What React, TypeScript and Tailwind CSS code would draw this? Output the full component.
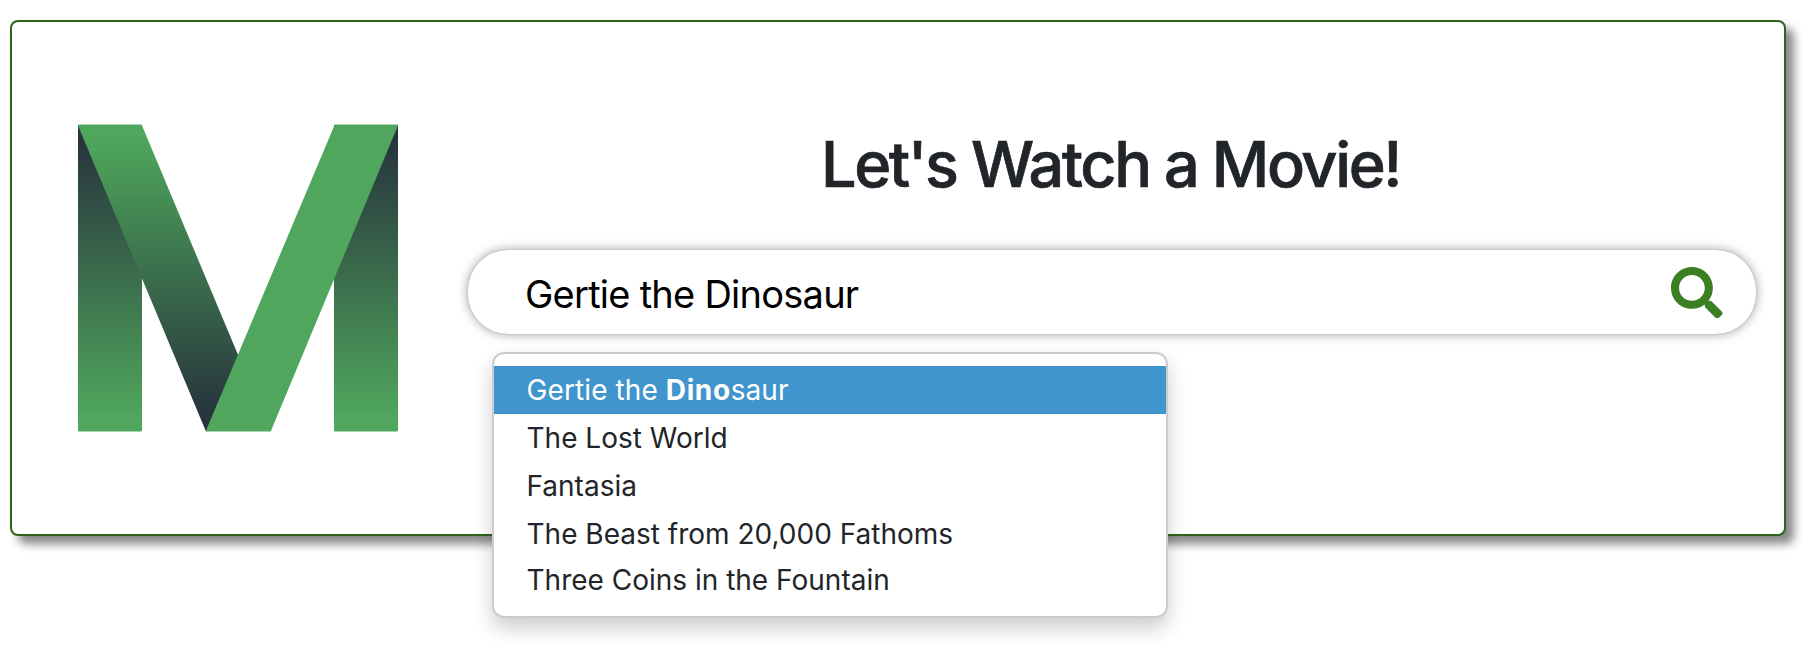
import { FaSearch } from "react-icons/fa";

const movies = [
  "The Lost World",
  "Fantasia",
  "The Beast from 20,000 Fathoms",
  "Three Coins in the Fountain",
];

function Logo() {
  return (
    <svg width="320" height="308" viewBox="0 0 320 308" className="block shrink-0" aria-label="Logo">
      <defs>
        <linearGradient id="post" x1="0" y1="0" x2="0" y2="308" gradientUnits="userSpaceOnUse">
          <stop offset="0.05" stopColor="#27343d" />
          <stop offset="0.95" stopColor="#4fa65c" />
        </linearGradient>
        <linearGradient id="stroke" x1="0" y1="0" x2="0" y2="308" gradientUnits="userSpaceOnUse">
          <stop offset="0.05" stopColor="#4fa65c" />
          <stop offset="0.95" stopColor="#27343d" />
        </linearGradient>
      </defs>
      <path d="M0 1H64V306.5L63 307.6H1L0 306.5Z" fill="url(#post)" />
      <path d="M256 1H320V306.5L319 307.6H257L256 306.5Z" fill="url(#post)" />
      <path d="M0 1.5L1 0.4H63.2L64 1.5L163 238L150 290L128 307.6Z" fill="url(#stroke)" />
      <path d="M256.8 0.4H319L320 1.5L193 306.8L192.4 307.6H127.6Z" fill="#4fa65c" />
    </svg>
  );
}

function Suggestions() {
  return (
    <ul className="absolute top-[102px] left-6 h-[266px] w-[676px] rounded-xl border-2 border-[#ccc] bg-white py-3 text-[28px] leading-[48px] text-[#212529] shadow-[0_10px_20px_rgba(0,0,0,0.2)]">
      <li className="bg-[#4095cc] px-[32.5px] tracking-[0.1px] text-white">
        Gertie the <strong className="font-bold tracking-[0.6px]">Dino</strong>saur
      </li>
      {movies.map((movie) => (
        <li key={movie} className="px-[32.5px] last:leading-[44px]">
          {movie}
        </li>
      ))}
    </ul>
  );
}

export default function App() {
  return (
    <div className="h-[646px] overflow-hidden bg-white pt-5 pl-2.5 font-['Inter',sans-serif]">
      <main className="flex h-[516px] w-[1776px] rounded-lg border-2 border-[#2d6419] bg-white pt-[102px] pr-7 pl-[66px] shadow-[8px_8px_10px_#888]">
        <Logo />
        <section className="ml-[70px] flex w-[1288px] flex-col">
          <h1 className="h-[126px] pr-[3px] text-center text-[63px] leading-[80px] font-medium tracking-[-2.4px] text-[#212529] [-webkit-text-stroke:0.7px_#212529]">
            Let's Watch a Movie!
          </h1>
          <div className="relative">
            <div className="flex h-[84px] items-center justify-between rounded-[40px] bg-white pr-[33.5px] pl-[57px] shadow-[0_0_1px_rgba(0,0,0,0.25),0_0_11px_rgba(0,0,0,0.4)]">
              <span className="pt-[3px] text-[38px] leading-[46px] tracking-[-0.75px] text-black">Gertie the Dinosaur</span>
              <FaSearch className="mt-px size-[51.5px] text-[#3a8023]" />
            </div>
            <Suggestions />
          </div>
        </section>
      </main>
    </div>
  );
}
